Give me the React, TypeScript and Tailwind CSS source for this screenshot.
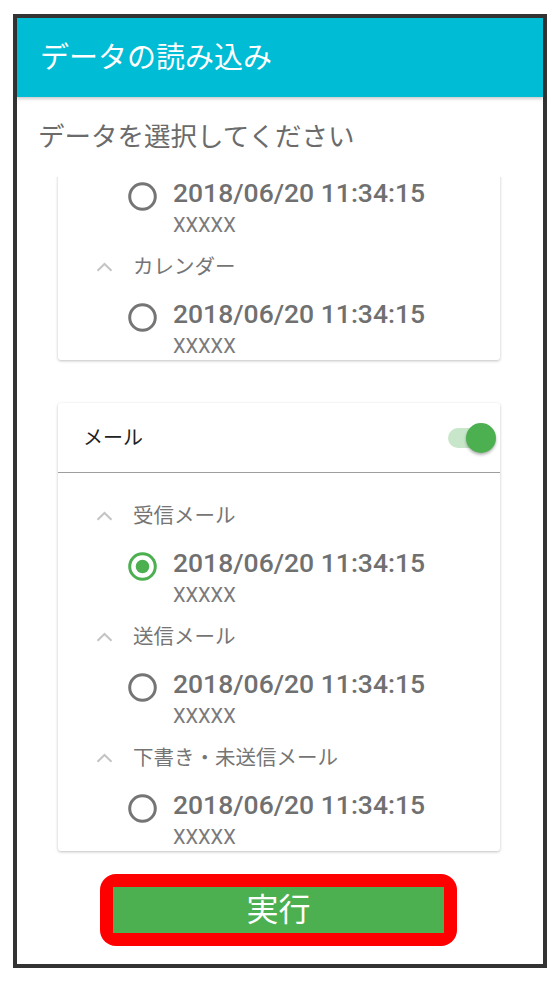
import React from "react";

const FONT = "font-['Roboto','Noto_Sans_CJK_JP',sans-serif]";

const Chevron = () => (
  <svg width="17" height="10" viewBox="0 0 17 10" className="shrink-0">
    <polyline points="1.5,8.8 8.5,2 15.5,8.8" fill="none" stroke="#c4c4c4" strokeWidth="2" />
  </svg>
);

const Radio = ({ checked }: { checked?: boolean }) => (
  <svg width="29" height="29" viewBox="0 0 29 29" className="mt-[5px] shrink-0">
    <circle cx="14.5" cy="14.5" r="12.8" fill="none" stroke={checked ? "#4caf50" : "#757575"} strokeWidth="3" />
    {checked && <circle cx="14.5" cy="14.5" r="6.8" fill="#4caf50" />}
  </svg>
);

const Item = ({ checked, last }: { checked?: boolean; last?: boolean }) => (
  <div className={`flex pl-[70px] pt-[11px] ${last ? "" : "pb-[8px]"}`}>
    <Radio checked={checked} />
    <div className="ml-[16px] flex flex-col">
      <span className="text-[26.5px] leading-[32px] font-medium text-[#707070]">2018/06/20 11:34:15</span>
      <span className="mt-[2px] text-[20px] leading-[28px] text-[#7a7a7a]">XXXXX</span>
    </div>
  </div>
);

const Group = ({ title, checked, last }: { title: string; checked?: boolean; last?: boolean }) => (
  <div>
    <div className="flex h-[40px] items-center pl-[38px]">
      <Chevron />
      <span className="ml-[20px] text-[20.5px] text-[#757575]">{title}</span>
    </div>
    <Item checked={checked} last={last} />
  </div>
);

const Card = ({ children, className }: { children: React.ReactNode; className?: string }) => (
  <div className={`rounded-[3px] bg-white shadow-[0_1px_3px_rgba(0,0,0,0.25)] ${className ?? ""}`}>{children}</div>
);

export default function App() {
  return (
    <div className={`min-h-[981px] bg-white pl-[13px] pt-[14px] ${FONT}`}>
      <div className="flex h-[954px] w-[534px] flex-col border-4 border-[#333333] bg-white">
        <div className="relative z-10 flex h-[79px] shrink-0 items-center bg-[#00bcd4] pl-[23px] shadow-[0_2px_3px_rgba(0,0,0,0.2)]">
          <h1 className="pt-[2px] text-[29px] text-white">データの読み込み</h1>
        </div>

        <div className="flex h-[80px] shrink-0 items-center pl-[21px]">
          <h2 className="text-[26.5px] text-[#6b6b6b]">データを選択してください</h2>
        </div>

        <div className="h-[685px] shrink-0 overflow-hidden pl-[41px] pr-[43px]">
          <Card className="-mt-[11px]">
            <Item />
            <Group title="カレンダー" last />
          </Card>

          <Card className="mt-[43px]">
            <div className="flex h-[70px] items-center justify-between border-b border-[#9e9e9e] pl-[25px] pr-[4px]">
              <span className="text-[20px] text-[#222222]">メール</span>
              <div className="relative h-[30px] w-[48px]">
                <div className="absolute left-0 top-[5px] h-[20px] w-[40px] rounded-full bg-[#c8e6c9]" />
                <div className="absolute right-0 top-0 h-[30px] w-[30px] rounded-full bg-[#4caf50] shadow-[0_2px_3px_rgba(0,0,0,0.3)]" />
              </div>
            </div>
            <div className="pt-[23px]">
              <Group title="受信メール" checked />
              <Group title="送信メール" />
              <Group title="下書き・未送信メール" last />
            </div>
          </Card>
        </div>

        <div className="pl-[83px] pt-[12px]">
          <div className="h-[72px] w-[357px] rounded-[16px] bg-[#ff0000] p-[13px]">
            <button className="flex h-full w-full items-center justify-center bg-[#4caf50] text-[32px] text-white">
              実行
            </button>
          </div>
        </div>
      </div>
    </div>
  );
}
